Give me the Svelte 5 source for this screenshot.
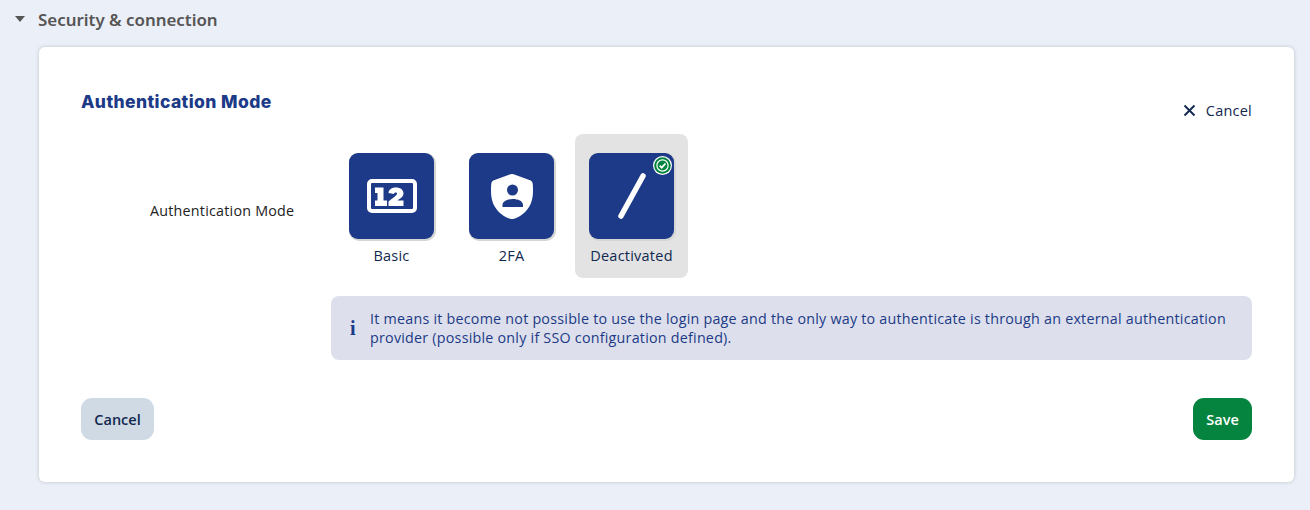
<script>
  let modes = [
    { id: "basic", label: "Basic" },
    { id: "2fa", label: "2FA" },
    { id: "deactivated", label: "Deactivated" }
  ];
  let active = "deactivated";
</script>

<section class="panel">
  <header class="section-head">
    <svg class="caret" width="10" height="6" viewBox="0 0 10 6"><path d="M0 0h10L5 6z" fill="#555" /></svg>
    <span>Security &amp; connection</span>
  </header>

  <div class="card">
    <div class="title-row">
      <h2>Authentication Mode</h2>
      <button class="close">
        <svg width="13" height="13" viewBox="0 0 13 13"><path d="M1.500 1.500l10 10M11.500 1.500l-10 10" stroke="#12284f" stroke-width="1.900" fill="none" /></svg>
        Cancel
      </button>
    </div>

    <div class="field">
      <div class="field-label">Authentication Mode</div>
      <div class="modes">
        {#each modes as mode}
          <div class="mode" class:selected={mode.id === active}>
            <div class="tile">
              {#if mode.id === "basic"}
                <svg width="50" height="34" viewBox="0 0 50 34">
                  <rect x="2" y="2" width="46" height="30" rx="3" fill="none" stroke="#fff" stroke-width="4" />
                  <path d="M8 8.500h8.500v13H20V27H8v-5.500h2.500V14H8z" fill="#fff" />
                  <path d="M21.500 14c0-3.500 3.500-5.500 7.500-5.500s7.500 2 7.500 6c0 3-2.500 4.500-6 7h6V27h-15v-4.500c5-4 8.500-6 8.500-8 0-1.500-3-1.500-3 .5z" fill="#fff" />
                </svg>
              {:else if mode.id === "2fa"}
                <svg width="42" height="45" viewBox="0 0 42 45">
                  <path fill-rule="evenodd" fill="#fff" d="M21 0c1 0 2 .3 3 .7l15 5.600c1.500.6 2.500 1.700 2.700 3.400.8 9 .3 17-3.700 23.300-3.500 5.500-9 10-15 11.700-1.300.4-2.700.4-4 0C13 43 7.500 38.500 4 33 0 26.700-.5 18.700.3 9.700.5 8 1.500 6.900 3 6.300L18 .7c1-.4 2-.7 3-.7zM21.500 10.500a5.500 5.500 0 1 0 0 11 5.500 5.500 0 0 0 0-11zM11.500 33h20.500v-2c0-4-5-6-10.200-6s-10.300 2-10.300 6z" />
                </svg>
              {:else}
                <svg width="30" height="46" viewBox="0 0 30 46">
                  <path d="M26 3L4 43" stroke="#fff" stroke-width="5.500" stroke-linecap="round" fill="none" />
                </svg>
              {/if}
              {#if mode.id === active}
                <span class="check">
                  <svg width="19" height="19" viewBox="0 0 19 19">
                    <circle cx="9.500" cy="9.500" r="9.500" fill="#fff" />
                    <circle cx="9.500" cy="9.500" r="8.300" fill="#05843f" />
                    <circle cx="9.500" cy="9.500" r="5.600" fill="none" stroke="#fff" stroke-width="1.200" />
                    <path d="M6.700 9.700l2 2 3.800-4.200" stroke="#fff" stroke-width="1.800" fill="none" />
                  </svg>
                </span>
              {/if}
            </div>
            <span class="mode-label">{mode.label}</span>
          </div>
        {/each}
      </div>
    </div>

    <div class="info">
      <span class="info-icon">i</span>
      <p>It means it become not possible to use the login page and the only way to authenticate is through an external authentication provider (possible only if SSO configuration defined).</p>
    </div>

    <div class="actions">
      <button class="btn cancel">Cancel</button>
      <button class="btn save">Save</button>
    </div>
  </div>
</section>

<style>
  :global(body) {
    background: #ebeff7;
  }

  .panel {
    height: 510px;
    box-sizing: border-box;
    font-family: "Open Sans", sans-serif;
    letter-spacing: 0.23px;
    color: #12284f;
  }

  .section-head {
    height: 38px;
    display: flex;
    align-items: center;
    gap: 13px;
    padding-left: 15px;
    font-family: "Noto Sans", sans-serif;
    font-size: 16.900px;
    font-weight: 600;
    letter-spacing: 0;
    color: #555;
  }

  .card {
    margin: 9px 16px 0 39px;
    height: 435px;
    box-sizing: border-box;
    padding: 42px 42px 0;
    background: #fff;
    border-radius: 6px;
    box-shadow: 0 0 4px rgba(0, 0, 0, 0.18);
  }

  .title-row {
    display: flex;
    justify-content: space-between;
    height: 45px;
  }

  h2 {
    margin: 0;
    font-family: "Inter", sans-serif;
    font-size: 17.500px;
    font-weight: 800;
    letter-spacing: 0.4px;
    line-height: 26px;
    color: #1c3a87;
  }

  .close {
    display: flex;
    align-items: center;
    gap: 10px;
    height: 26px;
    margin-top: 8px;
    padding: 0;
    border: 0;
    background: none;
    font: inherit;
    letter-spacing: inherit;
    font-size: 14.500px;
    color: #12284f;
  }

  .field {
    display: flex;
  }

  .field-label {
    width: 213px;
    padding: 67px 0 0 69px;
    box-sizing: border-box;
    font-size: 14.300px;
    line-height: 20px;
    white-space: nowrap;
    color: #222;
  }

  .modes {
    display: flex;
    margin-left: 41px;
    gap: 7px;
  }

  .mode {
    width: 113px;
    height: 144px;
    box-sizing: border-box;
    padding-top: 19px;
    display: flex;
    flex-direction: column;
    align-items: center;
    border-radius: 8px;
  }

  .mode.selected {
    background: #e3e3e3;
  }

  .tile {
    position: relative;
    width: 85px;
    height: 86px;
    display: flex;
    align-items: center;
    justify-content: center;
    background: #1c3a87;
    border-radius: 9px;
    box-shadow: 1px 1px 0 1px #d5d5d5;
  }

  .check {
    position: absolute;
    top: 3px;
    right: 2px;
    display: flex;
  }

  .mode-label {
    margin-top: 7px;
    font-size: 14.500px;
    line-height: 20px;
  }

  .info {
    display: flex;
    align-items: center;
    margin: 18px 0 0 250px;
    height: 64px;
    box-sizing: border-box;
    padding: 0 20px 0 19px;
    background: #dde0ec;
    border-radius: 8px;
  }

  .info-icon {
    width: 20px;
    flex: none;
    font-family: "Liberation Serif", serif;
    font-size: 20px;
    font-weight: 700;
    color: #1c3a87;
  }

  .info p {
    margin: 0;
    font-size: 14.300px;
    line-height: 19px;
    color: #1c3a87;
  }

  .actions {
    display: flex;
    justify-content: space-between;
    margin-top: 38px;
  }

  .btn {
    height: 42px;
    border: 0;
    border-radius: 11px;
    font: inherit;
    letter-spacing: 0;
    font-size: 14.500px;
    font-weight: 600;
  }

  .cancel {
    width: 73px;
    background: #cfdae4;
    color: #12284f;
  }

  .save {
    width: 59px;
    background: #05843f;
    color: #fff;
  }
</style>
